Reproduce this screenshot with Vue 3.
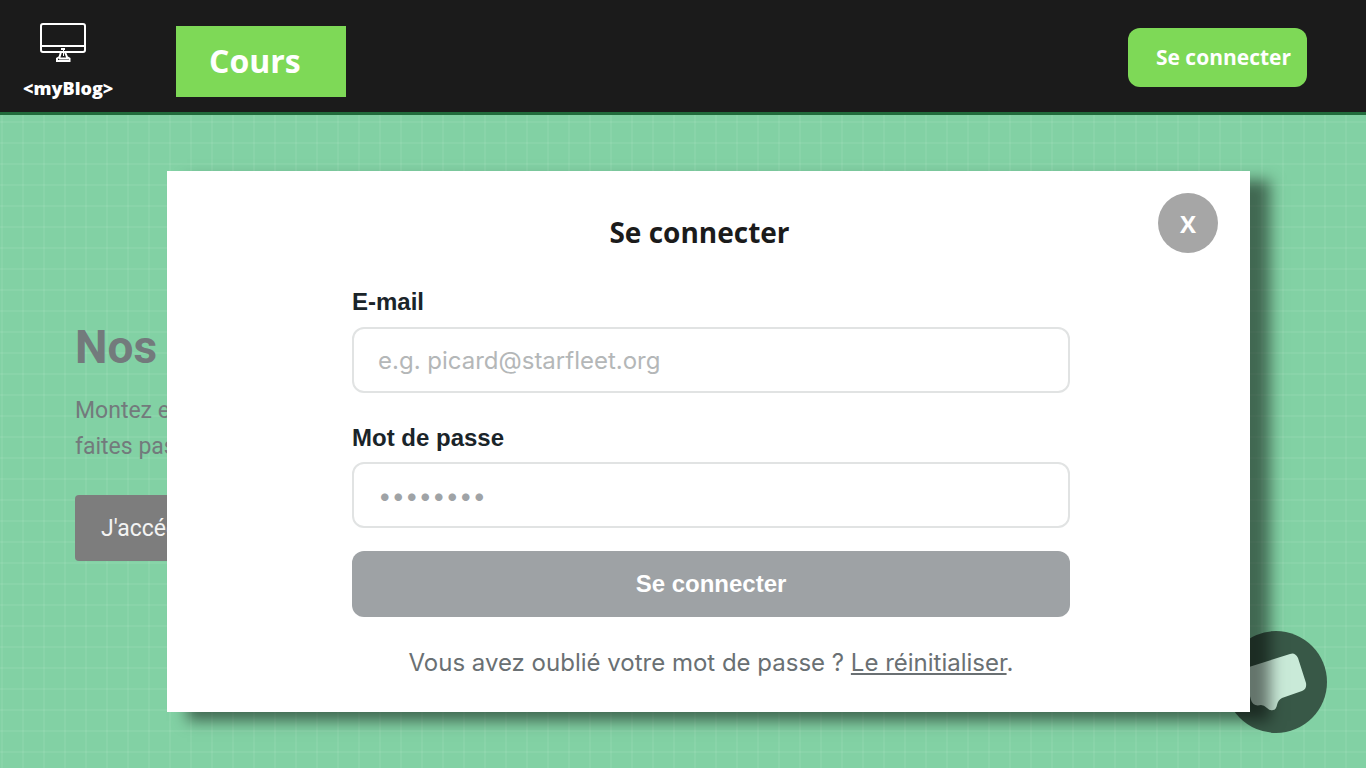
<script setup>
import { ref } from 'vue'

const email = ref('')
const password = ref('')
</script>

<template>
  <div class="page">
    <header class="topbar">
      <a class="brand" href="#">
        <svg class="brand-icon" viewBox="0 0 48 42" width="48" height="42" fill="none" stroke="#fff" stroke-width="2" aria-hidden="true">
          <rect x="2" y="2" width="44" height="28" rx="2" />
          <path d="M2 24H46" />
          <path d="M22 27h4" />
          <path d="M22 30L20.500 35L18 36.500V39H30.500V36.500L28 35L26 30M20 36.500H29" />
          <path d="M24.500 28v6" stroke-width="1" />
        </svg>
        <span class="brand-name">&lt;myBlog&gt;</span>
      </a>
      <nav><a class="nav-link" href="#">Cours</a></nav>
      <button class="login" type="button">Se connecter</button>
    </header>

    <main class="hero">
      <h1>Nos</h1>
      <p>Montez e<br />faites pas</p>
      <button class="cta" type="button">J'accéd</button>
    </main>

    <button class="chat" type="button" aria-label="Chat">
      <svg viewBox="0 0 102 102" aria-hidden="true">
        <circle cx="51" cy="51" r="51" fill="#385847" />
        <path d="M24 36L65 23Q70 21 73 27L81 52Q82 58 77 60L57 67Q53 69 52 74Q51 79 48 79Q45 80 42 77Q39 74 36 74Q28 76 26 69L20 46Q18 38 24 36Z" fill="#c9ead8" />
      </svg>
    </button>

    <div class="overlay">
      <section class="modal" role="dialog" aria-labelledby="login-title">
        <button class="close" type="button">X</button>
        <h2 id="login-title">Se connecter</h2>
        <form @submit.prevent>
          <label for="email">E-mail</label>
          <input id="email" v-model="email" type="email" placeholder="e.g. picard@starfleet.org" />
          <label for="password">Mot de passe</label>
          <input id="password" v-model="password" type="password" placeholder="••••••••" />
          <button class="submit" type="submit">Se connecter</button>
          <p class="forgot">Vous avez oublié votre mot de passe ? <a href="#">Le réinitialiser</a>.</p>
        </form>
      </section>
    </div>
  </div>
</template>

<style>
body {
  margin: 0;
}
</style>

<style scoped>
* {
  box-sizing: border-box;
}
.page {
  position: relative;
  min-height: 100vh;
  overflow: hidden;
  background-color: #82d1a4;
  background-image:
    linear-gradient(90deg, rgba(255, 255, 255, 0.06) 2px, transparent 2px),
    linear-gradient(rgba(255, 255, 255, 0.06) 2px, transparent 2px);
  background-size: 21px 21px;
  background-position: 1px 16px;
}
button {
  border: 0;
  padding: 0;
  cursor: pointer;
}
.topbar {
  display: flex;
  align-items: flex-start;
  height: 115px;
  padding: 0 59px 0 23px;
  background: #1b1b1b;
  border-bottom: 3px solid #216b3c;
  font-family: "Open Sans", sans-serif;
}
.brand {
  display: flex;
  flex-direction: column;
  width: 153px;
  padding-top: 22px;
  color: #fff;
  text-decoration: none;
}
.brand-icon {
  margin-left: 16px;
}
.brand-name {
  margin-top: 12px;
  font-size: 18px;
  line-height: 24px;
  font-weight: 800;
}
.nav-link {
  display: block;
  width: 170px;
  margin-top: 26px;
  padding: 0 0 2px 33px;
  background: #7ed957;
  color: #fff;
  font-size: 32px;
  line-height: 69px;
  font-weight: 700;
  text-decoration: none;
}
.login {
  width: 179px;
  height: 59px;
  margin: 28px 0 0 auto;
  padding: 0 0 2px 12px;
  border-radius: 12px;
  background: #7ed957;
  color: #fff;
  font-family: "Open Sans", sans-serif;
  font-size: 21px;
  font-weight: 700;
}
.hero {
  padding: 204px 75px 0;
  font-family: Roboto, sans-serif;
  color: #737a7c;
}
.hero h1 {
  margin: 0;
  font-size: 46px;
  line-height: 56px;
  font-weight: 700;
}
.hero p {
  margin: 18px 0 0;
  font-size: 23px;
  line-height: 36px;
}
.cta {
  width: 240px;
  height: 66px;
  margin-top: 30px;
  padding-left: 26px;
  border-radius: 4px;
  background: #7d7d7d;
  color: #f3f3f3;
  font-family: Roboto, sans-serif;
  font-size: 23px;
  text-align: left;
}
.chat {
  position: absolute;
  right: 39px;
  bottom: 35px;
  width: 102px;
  height: 102px;
  border-radius: 50%;
  background: none;
}
.chat svg {
  display: block;
}
.overlay {
  position: absolute;
  inset: 0;
  padding: 171px 116px 56px 167px;
}
.modal {
  position: relative;
  padding: 39px 180px 33px 185px;
  background: #fff;
  box-shadow: 20px 9px 14px rgba(0, 0, 0, 0.5);
}
.close {
  position: absolute;
  top: 22px;
  right: 32px;
  width: 60px;
  height: 60px;
  border-radius: 50%;
  background: #a6a6a6;
  color: #fff;
  font-family: "Open Sans", sans-serif;
  font-size: 24px;
  font-weight: 700;
}
.modal h2 {
  margin: 0 23px 0 0;
  color: #1b1b1b;
  font-family: "Open Sans", sans-serif;
  font-size: 28px;
  line-height: 44px;
  font-weight: 700;
  text-align: center;
}
form {
  display: flex;
  flex-direction: column;
  margin-top: 33px;
  font-family: Inter, sans-serif;
}
label {
  color: #1a2429;
  font-family: "Liberation Sans", sans-serif;
  font-size: 24px;
  line-height: 30px;
  font-weight: 700;
}
input {
  height: 66px;
  margin: 10px 0 30px;
  padding: 0 24px;
  border: 2px solid #e1e3e3;
  border-radius: 12px;
  background: #fff;
  font-family: inherit;
  font-size: 24px;
}
#password {
  margin: 9px 0 23px;
}
input::placeholder {
  color: #b4b7b8;
  opacity: 1;
}
#password::placeholder {
  color: #9fa3a6;
}
.submit {
  height: 66px;
  border-radius: 12px;
  background: #9ea2a5;
  color: #fff;
  font-family: "Liberation Sans", sans-serif;
  font-size: 24px;
  font-weight: 700;
}
.forgot {
  margin: 30px 0 0;
  color: #6a7073;
  font-size: 24px;
  line-height: 32px;
  text-align: center;
}
.forgot a {
  color: inherit;
}
</style>
